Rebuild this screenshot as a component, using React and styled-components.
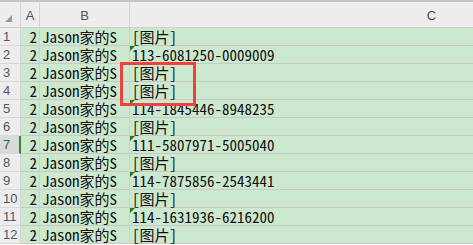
import styled, { createGlobalStyle } from "styled-components";

const GlobalStyle = createGlobalStyle`
  html, body {
    margin: 0;
    padding: 0;
    background: #ffffff;
    overflow: hidden;
  }
`;

const rows = [
  "[图片]",
  "113-6081250-0009009",
  "[图片]",
  "[图片]",
  "114-1845446-8948235",
  "[图片]",
  "111-5807971-5005040",
  "[图片]",
  "114-7875856-2543441",
  "[图片]",
  "114-1631936-6216200",
  "[图片]",
];

const Wrap = styled.div`
  position: relative;
  width: 473px;
  height: 245px;
  overflow: hidden;
  border-top: 2px solid #c4c4c4;
  box-sizing: border-box;
`;

const Sheet = styled.div`
  display: grid;
  grid-template-columns: 21px 19px 90px 604px;
  grid-template-rows: 26px repeat(12, 18px);
`;

const Corner = styled.div`
  background: #ededed;
  border-right: 1px solid #d4d4d4;
  border-bottom: 1px solid #cfcfcf;
  display: flex;
  align-items: flex-end;
  padding: 0 0 5px 5px;
  box-sizing: border-box;
`;

const CornerMark = styled.div`
  width: 0;
  height: 0;
  border-left: 7px solid transparent;
  border-bottom: 7px solid #9a9a9a;
`;

const ColHead = styled.div`
  background: #ededed;
  border-right: 1px solid #d4d4d4;
  border-bottom: 1px solid #cfcfcf;
  display: flex;
  align-items: flex-end;
  justify-content: center;
  padding-bottom: 4px;
  box-sizing: border-box;
  font-family: "Liberation Sans", Arial, sans-serif;
  font-size: 13px;
  line-height: 15px;
  color: #4a5160;
`;

const RowHead = styled.div`
  background: ${(p) => (p.$active ? "#dadada" : "#ededed")};
  border-right: ${(p) => (p.$active ? "2px solid #2f8a2a" : "1px solid #d4d4d4")};
  border-bottom: 1px solid #d8d8d8;
  box-sizing: border-box;
  display: flex;
  align-items: center;
  padding-left: 3px;
  font-family: "Liberation Sans", Arial, sans-serif;
  font-size: 13px;
  line-height: 15px;
  color: ${(p) => (p.$active ? "#2f6f2a" : "#4f5866")};
`;

const Cell = styled.div`
  position: relative;
  background: #cce8cf;
  border-right: 1px solid #c4d6c6;
  border-bottom: 1px solid #c8c8c8;
  box-sizing: border-box;
  display: flex;
  align-items: center;
  justify-content: ${(p) => (p.$right ? "flex-end" : "flex-start")};
  padding: 0 2px;
  font-family: "Noto Sans Mono CJK SC", "Liberation Mono", "Noto Sans CJK SC", monospace;
  font-size: 15px;
  line-height: 16px;
  color: #111111;
  white-space: nowrap;
`;

const Flag = styled.span`
  position: absolute;
  left: 0;
  top: 0;
  width: 0;
  height: 0;
  border-top: 5px solid #1d7d1d;
  border-right: 5px solid transparent;
`;

const Highlight = styled.div`
  position: absolute;
  left: 120px;
  top: 60px;
  width: 76px;
  height: 44px;
  border: 3px solid #f04040;
  box-sizing: border-box;
`;

export default function App() {
  return (
    <Wrap>
      <GlobalStyle />
      <Sheet>
        <Corner>
          <CornerMark />
        </Corner>
        <ColHead>A</ColHead>
        <ColHead>B</ColHead>
        <ColHead>C</ColHead>
        {rows.map((value, i) => {
          const isOrder = value !== "[图片]";
          return [
            <RowHead key={`h${i}`} $active={i === 6}>
              {i + 1}
            </RowHead>,
            <Cell key={`a${i}`} $right>
              2
            </Cell>,
            <Cell key={`b${i}`}>Jason家的S</Cell>,
            <Cell key={`c${i}`}>
              {isOrder && <Flag />}
              {value}
            </Cell>,
          ];
        })}
      </Sheet>
      <Highlight />
    </Wrap>
  );
}
